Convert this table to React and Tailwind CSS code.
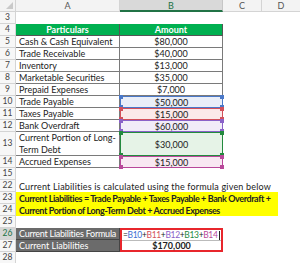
import React from 'react'

const font = { fontFamily: 'Lato, "Open Sans", sans-serif' }

const refs = {
  10: { bg: 'bg-[#e9eef8]', bd: 'border-[#4a78c8]', sq: 'bg-[#4a78c8]' },
  11: { bg: 'bg-[#fbe9ea]', bd: 'border-[#d2505a]', sq: 'bg-[#d2505a]' },
  12: { bg: 'bg-[#f1ecf8]', bd: 'border-[#8a62c8]', sq: 'bg-[#8a62c8]' },
  13: { bg: 'bg-[#e6f3e7]', bd: 'border-[#238a3e]', sq: 'bg-[#238a3e]' },
  14: { bg: 'bg-[#f8e8f2]', bd: 'border-[#b8489a]', sq: 'bg-[#b8489a]' },
}

const items = [
  [5, 'Cash & Cash Equivalent', '$80,000'],
  [6, 'Trade Receivable', '$40,000'],
  [7, 'Inventory', '$13,000'],
  [8, 'Marketable Securities', '$35,000'],
  [9, 'Prepaid Expenses', '$7,000'],
  [10, 'Trade Payable', '$50,000'],
  [11, 'Taxes Payable', '$15,000'],
  [12, 'Bank Overdraft', '$60,000'],
  [13, 'Current Portion of Long-Term Debt', '$30,000'],
  [14, 'Accrued Expenses', '$15,000'],
]

const RowHead = ({ n, active }) => (
  <div
    className={`w-[16px] h-full shrink-0 flex items-center justify-center border-r border-b border-[#d4d4d4] text-[8.5px] ${
      active ? 'bg-[#d6d6d6] text-[#217346]' : 'bg-[#f7f7f7] text-[#444]'
    }`}
  >
    {n}
  </div>
)

const Squares = ({ c }) => (
  <>
    <span className={`absolute -left-[2px] -top-[2px] w-[4px] h-[4px] ${c}`} />
    <span className={`absolute -right-[2px] -top-[2px] w-[4px] h-[4px] ${c}`} />
    <span className={`absolute -left-[2px] -bottom-[2px] w-[4px] h-[4px] ${c}`} />
    <span className={`absolute -right-[2px] -bottom-[2px] w-[4px] h-[4px] ${c}`} />
  </>
)

export default function App() {
  return (
    <div className="w-[300px] h-[263px] overflow-hidden bg-white text-[#222] text-[9px] leading-none" style={font}>
      {/* column headers */}
      <div className="flex h-[12px] bg-[#f3f3f3] text-[#555]">
        <div className="relative w-[16px] border-r border-b border-[#d4d4d4]">
          <span className="absolute right-[2px] bottom-[2px] w-0 h-0 border-l-[7px] border-l-transparent border-b-[7px] border-b-[#c9c9c9]" />
        </div>
        <div className="w-[104px] flex items-center justify-center border-r border-b border-[#d4d4d4]">A</div>
        <div className="w-[103px] flex items-center justify-center bg-[#d9d9d9] border-r border-[#c6c6c6] border-b-2 border-b-[#217346] text-[#217346]">B</div>
        <div className="w-[39px] flex items-center justify-center border-r border-b border-[#d4d4d4]">C</div>
        <div className="flex-1 flex items-center justify-center border-b border-[#d4d4d4]">D</div>
      </div>

      {/* row 3 */}
      <div className="flex h-[12px]">
        <RowHead n={3} />
      </div>

      {/* row 4 header */}
      <div className="flex h-[12px]">
        <RowHead n={4} />
        <div className="w-[104px] bg-[#00b050] text-white font-bold flex items-center justify-center border-b border-r border-[#555]">Particulars</div>
        <div className="w-[103px] bg-[#00b050] text-white font-bold flex items-center justify-center border-b border-r border-[#555]">Amount</div>
      </div>

      {items.map(([n, label, amt]) => {
        const r = refs[n]
        const tall = n === 13
        return (
          <div key={n} className={`flex ${tall ? 'h-[24px]' : 'h-[12px]'}`}>
            <RowHead n={n} />
            <div className={`w-[104px] flex items-center px-[3px] border-b border-r border-[#7a7a7a] ${tall ? 'leading-[12px]' : ''}`}>
              {tall ? (
                <span>Current Portion of Long-<br />Term Debt</span>
              ) : (
                label
              )}
            </div>
            {r ? (
              <div className={`relative w-[103px] flex items-center justify-center border ${r.bg} ${r.bd}`}>
                {amt}
                <Squares c={r.sq} />
              </div>
            ) : (
              <div className="w-[103px] flex items-center justify-center border-b border-r border-[#7a7a7a]">{amt}</div>
            )}
          </div>
        )
      })}

      {/* row 15 */}
      <div className="flex h-[12px]">
        <RowHead n={15} />
      </div>

      {/* row 22 */}
      <div className="flex h-[12px]">
        <RowHead n={22} />
        <div className="flex items-center px-[3px] whitespace-nowrap tracking-[0.18px]">Current Liabilities is calculated using the formula given below</div>
      </div>
      <div className="flex h-[12px]">
        <RowHead n={23} />
        <div className="w-[262px] flex items-center px-[3px] bg-[#ffff00] font-bold whitespace-nowrap tracking-[-0.4px]">
          Current Liabilities = Trade Payable + Taxes Payable + Bank Overdraft +
        </div>
      </div>
      <div className="flex h-[12px]">
        <RowHead n={24} />
        <div className="w-[262px] flex items-center px-[3px] bg-[#ffff00] font-bold whitespace-nowrap tracking-[-0.4px]">
          Current Portion of Long-Term Debt + Accrued Expenses
        </div>
      </div>
      <div className="flex h-[12px]">
        <RowHead n={25} />
      </div>

      {/* rows 26-27 */}
      <div className="flex h-[24px]">
        <div className="flex flex-col">
          <div className="h-[12px] flex"><RowHead n={26} active /></div>
          <div className="h-[12px] flex"><RowHead n={27} /></div>
        </div>
        <div className="w-[104px] flex flex-col bg-[#6b6b6b] text-white">
          <div className="h-[12px] flex items-center px-[3px] border-b border-r border-[#444] whitespace-nowrap tracking-[-0.25px]">Current Liabilities Formula</div>
          <div className="h-[12px] flex items-center px-[3px] border-b border-r border-[#444] whitespace-nowrap">Current Liabilities</div>
        </div>
        <div className="w-[103px] flex flex-col border-2 border-[#e8262c]">
          <div className="h-[10px] flex items-center px-[1px] whitespace-nowrap text-[8.5px] tracking-[-0.35px]">
            <span>=<span className="text-[#3b6fd4]">B10</span>+<span className="text-[#d2505a]">B11</span>+<span className="text-[#8a62c8]">B12</span>+<span className="text-[#238a3e]">B13</span>+<span className="text-[#b8489a]">B14</span></span>
            <span className="ml-[1px] w-px h-[9px] bg-[#222]" />
          </div>
          <div className="h-[10px] flex items-center justify-center font-bold border-t border-[#bbb]">$170,000</div>
        </div>
      </div>

      <div className="flex h-[12px]">
        <RowHead n={28} />
      </div>
    </div>
  )
}
